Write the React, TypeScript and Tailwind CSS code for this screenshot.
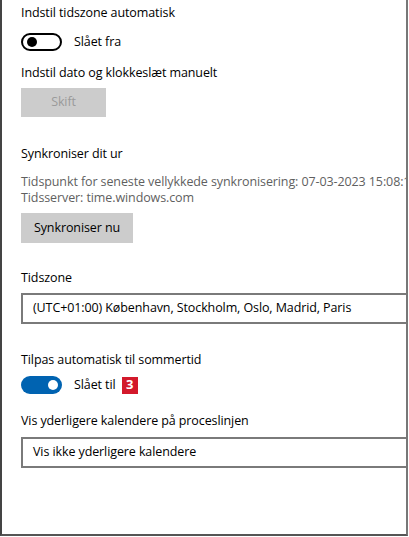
import React from 'react';

const font = { fontFamily: '"Open Sans", "Noto Sans", sans-serif' };

const Toggle = ({ on }: { on: boolean }) =>
  on ? (
    <span className="flex h-[18px] w-[41px] items-center justify-end rounded-full bg-[#0063b1] pr-[4px]">
      <span className="h-[10px] w-[10px] rounded-full bg-white" />
    </span>
  ) : (
    <span className="flex h-[18px] w-[41px] items-center rounded-full border-2 border-black pl-[4px]">
      <span className="h-[10px] w-[10px] rounded-full bg-black" />
    </span>
  );

const Select = ({ text }: { text: string }) => (
  <div className="mr-[-40px] flex h-[31px] items-center border-2 border-[#7a7a7a] pl-[10px] whitespace-nowrap">
    {text}
  </div>
);

export default function App() {
  return (
    <div style={font} className="h-[537px] w-[409px] bg-white text-[12.5px] tracking-[-0.1px] text-black">
      <div className="h-[536px] w-[408px] overflow-hidden border-b-2 border-l-2 border-r-2 border-b-[#555] border-l-[#444] border-r-[#777] bg-white">
        <div className="flex flex-col pl-[19px] pt-[3px]">
          <p className="leading-[20px]">Indstil tidszone automatisk</p>
          <div className="mt-[10px] flex items-center gap-[12px]">
            <Toggle on={false} />
            <span className="leading-[18px]">Slået fra</span>
          </div>

          <p className="mt-[12px] leading-[20px]">Indstil dato og klokkeslæt manuelt</p>
          <button className="mt-[5px] flex h-[29px] w-[85px] items-center justify-center bg-[#cccccc] text-[#9a9a9a]">
            Skift
          </button>

          <p className="mt-[27px] leading-[20px]">Synkroniser dit ur</p>
          <div className="mt-[10px] whitespace-nowrap leading-[16px] text-[#5f5f5f]">
            <p>Tidspunkt for seneste vellykkede synkronisering: 07-03-2023 15:08:15</p>
            <p>Tidsserver: time.windows.com</p>
          </div>
          <button className="mt-[7px] flex h-[30px] w-[112px] items-center justify-center bg-[#cccccc]">
            Synkroniser nu
          </button>

          <p className="mt-[25px] leading-[20px]">Tidszone</p>
          <div className="mt-[5px]">
            <Select text="(UTC+01:00) København, Stockholm, Oslo, Madrid, Paris" />
          </div>

          <p className="mt-[26px] leading-[20px]">Tilpas automatisk til sommertid</p>
          <div className="mt-[6px] flex items-center">
            <Toggle on />
            <span className="ml-[12px] leading-[18px]">Slået til</span>
            <span className="ml-[6px] flex h-[17px] w-[16px] items-center justify-center bg-[#d3192b] text-[13px] font-bold text-white">
              3
            </span>
          </div>

          <p className="mt-[17px] leading-[20px]">Vis yderligere kalendere på proceslinjen</p>
          <div className="mt-[6px]">
            <Select text="Vis ikke yderligere kalendere" />
          </div>
        </div>
      </div>
    </div>
  );
}
